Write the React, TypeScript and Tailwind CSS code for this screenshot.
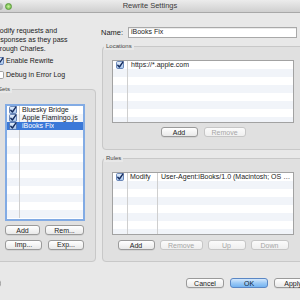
import clsx from "clsx";

const btnBase =
  "flex h-[10px] shrink-0 items-center justify-center rounded-[3px] border bg-linear-to-b text-[7px] leading-none";
const btnOn =
  "border-[#9a9a9a] from-white to-[#e9e9e9] text-[#1c1c1c] shadow-[0_0.5px_0_rgba(0,0,0,0.12)]";
const btnOff = "border-[#c6c6c6] from-[#fbfbfb] to-[#efefef] text-[#a6a6a6]";

function Btn({
  label,
  className,
  disabled,
  primary,
}: {
  label: string;
  className: string;
  disabled?: boolean;
  primary?: boolean;
}) {
  return (
    <button
      type="button"
      className={clsx(
        btnBase,
        primary
          ? "border-[#5b87c4] from-[#d4e8fc] via-[#9ccaf6] to-[#73b3f1] text-[#0e1f38]"
          : disabled
            ? btnOff
            : btnOn,
        className,
      )}
    >
      {label}
    </button>
  );
}

function Check({ checked = true }: { checked?: boolean }) {
  return (
    <svg width="8" height="8" viewBox="0 0 8 8" className="shrink-0 overflow-visible">
      <defs>
        <linearGradient id="chk" x1="0" y1="0" x2="0" y2="1">
          <stop offset="0" stopColor="#e8f1fc" />
          <stop offset="1" stopColor="#a3c2ea" />
        </linearGradient>
      </defs>
      <rect
        x="0.5"
        y="0.5"
        width="7"
        height="7"
        rx="1.2"
        fill={checked ? "url(#chk)" : "#ffffff"}
        stroke={checked ? "#4c6ea8" : "#8d8d8d"}
        strokeWidth="0.8"
      />
      {checked ? (
        <path
          d="M1.8 4.2 L3.4 6 L7 0.8"
          fill="none"
          stroke="#152c5e"
          strokeWidth="1.4"
          strokeLinecap="round"
          strokeLinejoin="round"
        />
      ) : null}
    </svg>
  );
}

const rows = (n: number) => Array.from({ length: n }, (_, i) => i);

const setItems = ["Bluesky Bridge", "Apple Flamingo.js", "iBooks Fix"];

function SetsList() {
  return (
    <div className="h-[117px] w-[80px] overflow-hidden border-2 border-[#82abe4] bg-white">
      {rows(14).map((i) => {
        const item = setItems[i];
        const selected = i === 2;
        return (
          <div
            key={i}
            className={clsx(
              "flex h-[8px]",
              selected ? "bg-[#3a78d8] text-white" : i % 2 ? "bg-[#f1f4f9]" : "bg-white",
            )}
          >
            <div
              className={clsx(
                "flex w-[13px] shrink-0 items-center justify-center border-r",
                selected ? "border-transparent" : "border-[#cfcfcf]",
              )}
            >
              {item ? <Check /> : null}
            </div>
            <div className="truncate pl-[2px] leading-[8px]">{item}</div>
          </div>
        );
      })}
    </div>
  );
}

function LocationsList() {
  return (
    <div className="h-[63px] w-[182px] overflow-hidden border border-[#a2a2a2] bg-white">
      {rows(8).map((i) => (
        <div key={i} className={clsx("flex h-[8px]", i % 2 ? "bg-[#f1f4f9]" : "bg-white")}>
          <div className="flex w-[15px] shrink-0 items-center justify-center border-r border-[#cfcfcf]">
            {i === 0 ? <Check /> : null}
          </div>
          <div className="truncate pl-[3px] leading-[8px]">{i === 0 ? "https://*.apple.com" : ""}</div>
        </div>
      ))}
    </div>
  );
}

function RulesList() {
  return (
    <div className="h-[63px] w-[182px] overflow-hidden border border-[#a2a2a2] bg-white">
      {rows(8).map((i) => (
        <div key={i} className={clsx("flex h-[8px]", i % 2 ? "bg-[#f1f4f9]" : "bg-white")}>
          <div className="flex w-[15px] shrink-0 items-center justify-center border-r border-[#cfcfcf]">
            {i === 0 ? <Check /> : null}
          </div>
          <div className="w-[30px] shrink-0 border-r border-[#cfcfcf] pl-[2px] leading-[8px]">
            {i === 0 ? "Modify" : ""}
          </div>
          <div className="truncate pl-[3px] leading-[8px]">
            {i === 0 ? "User-Agent:iBooks/1.0 (Macintosh; OS X ..." : ""}
          </div>
        </div>
      ))}
    </div>
  );
}

const groupClass = "rounded-[4px] border border-[#c8c8c8] bg-[#e0e0e0]";
const legendClass = "bg-[#e8e8e8] px-[2px] text-[6px] leading-[8px] text-[#454545]";

export default function App() {
  return (
    <div className="flex h-[300px] w-[300px] flex-col overflow-hidden bg-[#e8e8e8] font-['Liberation_Sans',Arial,sans-serif] text-[7px] text-[#1b1b1b]">
      {/* title bar */}
      <div className="relative flex h-[13px] shrink-0 items-center justify-center border-b border-[#a8a8a8] bg-linear-to-b from-[#ececec] to-[#cfcfcf] text-[7.5px] text-[#3a3a3a]">
        <span className="absolute left-[-4px] top-[3px] h-[7px] w-[7px] rounded-full bg-linear-to-b from-[#c9c9c9] to-[#a9a9a9]" />
        <span className="absolute left-[4.5px] top-[3px] h-[7px] w-[7px] rounded-full border border-[#5c9a3a] bg-radial from-[#c9f29a] to-[#5fb23a]" />
        Rewrite Settings
      </div>

      <div className="flex h-[249px] shrink-0">
        {/* left column */}
        <div className="ml-[-10px] flex w-[106px] shrink-0 flex-col">
          <p className="mt-[12.5px] pl-[4px] leading-[9px]">
            Modify requests and
            <br />
            responses as they pass
            <br />
            through Charles.
          </p>
          <label className="mt-[4px] flex h-[9px] items-center gap-[2px] pl-[6px]">
            <Check />
            Enable Rewrite
          </label>
          <label className="mt-[5px] flex h-[9px] items-center gap-[2px] pl-[6px]">
            <Check checked={false} />
            Debug in Error Log
          </label>
          <fieldset className={clsx(groupClass, "mt-[5.5px] min-h-0 flex-1")}>
            <legend className={clsx(legendClass, "ml-[5px]")}>Sets</legend>
            <div className="pl-[14px]">
              <div className="mt-[11px]">
                <SetsList />
              </div>
              <div className="mt-[4px] flex gap-[5px]">
                <Btn label="Add" className="w-[35px]" />
                <Btn label="Rem..." className="w-[39px]" />
              </div>
              <div className="mt-[4.5px] flex gap-[6px]">
                <Btn label="Imp..." className="w-[37px]" />
                <Btn label="Exp..." className="w-[36px]" />
              </div>
            </div>
          </fieldset>
        </div>

        {/* right column */}
        <div className="ml-[6px] flex w-[204px] shrink-0 flex-col">
          <div className="mt-[14px] flex h-[11px] items-center">
            <span className="ml-[-1px] w-[27px] shrink-0 text-[7.5px]">Name:</span>
            <div className="flex h-[11px] w-[169px] items-center border border-[#a9a9a9] bg-white pl-[2px] shadow-[inset_0_1px_0_rgba(0,0,0,0.08)]">
              iBooks Fix
            </div>
          </div>

          <fieldset className={clsx(groupClass, "mt-[4px]")}>
            <legend className={clsx(legendClass, "ml-[1px]")}>Locations</legend>
            <div className="pb-[12px] pl-[9px]">
              <div className="mt-[10px]">
                <LocationsList />
              </div>
              <div className="mt-[4px] flex w-[182px] justify-center gap-[6px]">
                <Btn label="Add" className="w-[37px]" />
                <Btn label="Remove" className="w-[42px]" disabled />
              </div>
            </div>
          </fieldset>

          <fieldset className={clsx(groupClass, "mt-[4px] min-h-0 flex-1")}>
            <legend className={clsx(legendClass, "ml-[1px]")}>Rules</legend>
            <div className="pl-[9px]">
              <div className="mt-[10px]">
                <RulesList />
              </div>
              <div className="mt-[5px] flex w-[182px] justify-center gap-[5px]">
                <Btn label="Add" className="w-[37px]" />
                <Btn label="Remove" className="w-[43px]" disabled />
                <Btn label="Up" className="w-[38px]" disabled />
                <Btn label="Down" className="w-[38px]" disabled />
              </div>
            </div>
          </fieldset>
        </div>
      </div>

      {/* footer */}
      <div className="flex h-[38px] shrink-0 items-center pt-[4px]">
        <div className="ml-[-12px] h-[13px] w-[13px] shrink-0 rounded-full border border-[#9a9a9a] bg-linear-to-b from-white to-[#e6e6e6]" />
        <div className="ml-[185px] flex gap-[6px]">
          <Btn label="Cancel" className="w-[38px]" />
          <Btn label="OK" className="w-[38px]" primary />
          <Btn label="Apply" className="w-[38px]" />
        </div>
      </div>
    </div>
  );
}
